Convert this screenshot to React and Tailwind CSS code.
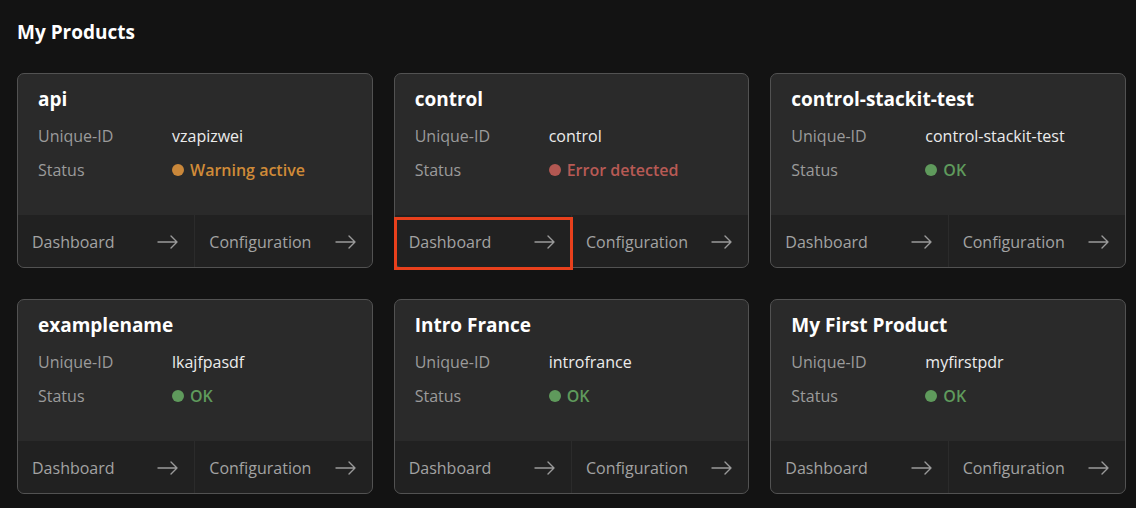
import React from 'react';

const products = [
  { name: 'api', id: 'vzapizwei', status: 'warning' },
  { name: 'control', id: 'control', status: 'error', highlight: true },
  { name: 'control-stackit-test', id: 'control-stackit-test', status: 'ok' },
  { name: 'examplename', id: 'lkajfpasdf', status: 'ok' },
  { name: 'Intro France', id: 'introfrance', status: 'ok' },
  { name: 'My First Product', id: 'myfirstpdr', status: 'ok' },
];

const statusMap = {
  ok: { label: 'OK', text: 'text-[#5f9a5c]', dot: 'bg-[#5f9a5c]' },
  warning: { label: 'Warning active', text: 'text-[#d08b38]', dot: 'bg-[#c9873a]' },
  error: { label: 'Error detected', text: 'text-[#b85a55]', dot: 'bg-[#b35852]' },
};

const Arrow = () => (
  <svg width="22" height="14" viewBox="0 0 22 14" fill="none" className="text-[#9a9a9a]">
    <path d="M1 7h19M14 1l6 6-6 6" stroke="currentColor" strokeWidth="1.4" strokeLinecap="round" strokeLinejoin="round" />
  </svg>
);

const FooterLink = ({ label, highlight, last }) => (
  <div className={`relative flex-1 flex items-center justify-between pt-[2px] pl-[14px] pr-[15px] ${last ? '' : 'border-r border-[#2b2b2b]'}`}>
    <span className="text-[16px] text-[#a3a3a3]">{label}</span>
    <Arrow />
    {highlight && (
      <div className="absolute left-[-1px] top-[2px] right-[-2px] bottom-[-3px] border-[3px] border-[#e8401c]" />
    )}
  </div>
);

const ProductCard = ({ p }) => {
  const s = statusMap[p.status];
  return (
    <div className="h-[195px] flex flex-col rounded-[7px] border border-[#525252] bg-[#2a2a2a]">
      <div className="flex-1 px-5 pt-[12px]">
        <h3 className="text-[19px] leading-[26px] font-bold text-white">{p.name}</h3>
        <div className="mt-[12px] grid grid-cols-[134px_1fr] gap-y-[10px] text-[16px] leading-[24px]">
          <span className="text-[#9b9b9b]">Unique-ID</span>
          <span className="text-[#ececec]">{p.id}</span>
          <span className="text-[#9b9b9b]">Status</span>
          <span className={`flex items-center gap-[6px] font-semibold ${s.text}`}>
            <span className={`w-[12px] h-[12px] rounded-full ${s.dot}`} />
            {s.label}
          </span>
        </div>
      </div>
      <div className="h-[52px] flex bg-[#212121] rounded-b-[7px]">
        <FooterLink label="Dashboard" highlight={p.highlight} />
        <FooterLink label="Configuration" last />
      </div>
    </div>
  );
};

export default function App() {
  return (
    <div className="min-h-[508px] bg-[#131313] pl-[17px] pr-[10px] pt-[18px] pb-4 font-['Open_Sans',sans-serif]">
      <h2 className="text-[19px] leading-[28px] font-bold text-white">My Products</h2>
      <div className="mt-[27px] grid grid-cols-3 gap-x-[21px] gap-y-[31px]">
        {products.map((p) => (
          <ProductCard key={p.name} p={p} />
        ))}
      </div>
    </div>
  );
}
